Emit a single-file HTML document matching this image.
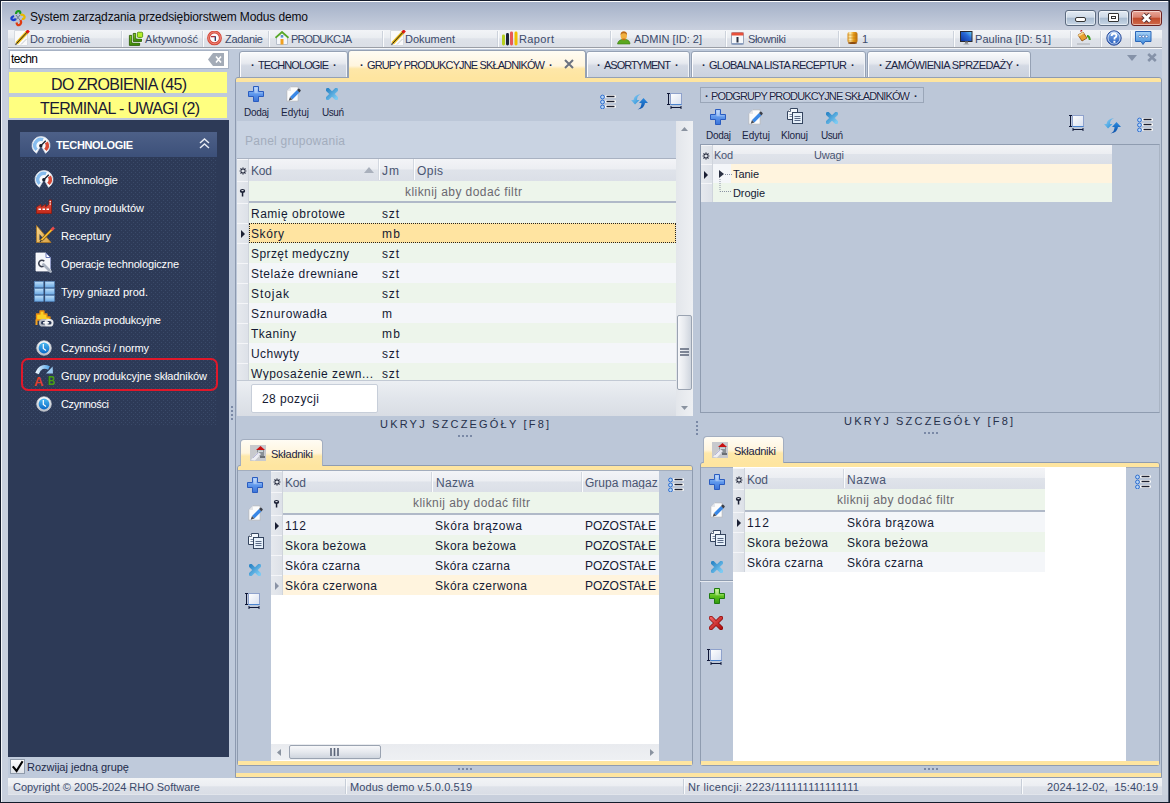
<!DOCTYPE html>
<html><head><meta charset="utf-8"><style>
html,body{margin:0;padding:0;}
body{width:1170px;height:803px;position:relative;overflow:hidden;font-family:'Liberation Sans', sans-serif;background:#bfcadb;}
div{box-sizing:border-box;}
</style></head><body>
<svg width="0" height="0" style="position:absolute"><defs>
<linearGradient id="gPlus" x1="0" y1="0" x2="0" y2="1"><stop offset="0" stop-color="#a9ccfa"/><stop offset="0.5" stop-color="#5f98ec"/><stop offset="1" stop-color="#3a72d8"/></linearGradient>
<linearGradient id="gPlusG" x1="0" y1="0" x2="0" y2="1"><stop offset="0" stop-color="#b6f07a"/><stop offset="0.5" stop-color="#5fc21e"/><stop offset="1" stop-color="#2f9a10"/></linearGradient>
<linearGradient id="gDel" x1="0" y1="0" x2="1" y2="1"><stop offset="0" stop-color="#2e88c8"/><stop offset="1" stop-color="#7ccaf2"/></linearGradient>
<linearGradient id="gRedX" x1="0" y1="0" x2="1" y2="1"><stop offset="0" stop-color="#f06060"/><stop offset="1" stop-color="#b01010"/></linearGradient>
<linearGradient id="gBox" x1="0" y1="0" x2="1" y2="1"><stop offset="0" stop-color="#ffffff"/><stop offset="1" stop-color="#d8e0f0"/></linearGradient>
<linearGradient id="gArrL" x1="0" y1="0" x2="1" y2="1"><stop offset="0" stop-color="#9ad4f6"/><stop offset="1" stop-color="#1d8ad6"/></linearGradient>
<linearGradient id="gArrR" x1="0" y1="0" x2="0" y2="1"><stop offset="0" stop-color="#2b8be0"/><stop offset="1" stop-color="#0b4fa8"/></linearGradient>
<linearGradient id="gGold" x1="0" y1="0" x2="1" y2="0"><stop offset="0" stop-color="#d98a10"/><stop offset="0.25" stop-color="#fff4c0"/><stop offset="0.6" stop-color="#e8a020"/><stop offset="1" stop-color="#b86a08"/></linearGradient>
<linearGradient id="gScreen" x1="0" y1="1" x2="1" y2="0"><stop offset="0" stop-color="#0a2f9a"/><stop offset="0.6" stop-color="#2a6ad8"/><stop offset="1" stop-color="#6ad8f8"/></linearGradient>
<linearGradient id="gHelp" x1="0" y1="0" x2="0" y2="1"><stop offset="0" stop-color="#8fb8f0"/><stop offset="1" stop-color="#1f56b8"/></linearGradient>
<linearGradient id="gChat" x1="0" y1="0" x2="0" y2="1"><stop offset="0" stop-color="#a8d4f8"/><stop offset="1" stop-color="#3a86d8"/></linearGradient>
<linearGradient id="gGreenL" x1="0" y1="0" x2="0" y2="1"><stop offset="0" stop-color="#8ed020"/><stop offset="1" stop-color="#3a8a08"/></linearGradient>
<linearGradient id="gGrid" x1="0" y1="0" x2="0" y2="1"><stop offset="0" stop-color="#bfe0fa"/><stop offset="1" stop-color="#6aa8e2"/></linearGradient>
<linearGradient id="gClock" x1="0" y1="0" x2="0" y2="1"><stop offset="0" stop-color="#4cb8f0"/><stop offset="1" stop-color="#0a6ac8"/></linearGradient>
<linearGradient id="gRing" x1="0" y1="0" x2="0" y2="1"><stop offset="0" stop-color="#ffffff"/><stop offset="1" stop-color="#b8bcc4"/></linearGradient>
<linearGradient id="gFact" x1="0" y1="0" x2="0" y2="1"><stop offset="0" stop-color="#f05a4a"/><stop offset="1" stop-color="#c02818"/></linearGradient>
<linearGradient id="gTri" x1="0" y1="0" x2="1" y2="1"><stop offset="0" stop-color="#f8d890"/><stop offset="1" stop-color="#d8a040"/></linearGradient>
<linearGradient id="gArc" x1="0" y1="0" x2="1" y2="0"><stop offset="0" stop-color="#e6f2fc"/><stop offset="1" stop-color="#58a8e8"/></linearGradient>
</defs></svg>
<div style="position:absolute;left:0px;top:0px;width:1170px;height:803px;background:#bfcadb;"></div>
<div style="position:absolute;left:0px;top:0px;width:1170px;height:30px;background:linear-gradient(#a2afc7,#c9d0de);"></div>
<div style="position:absolute;left:0px;top:0px;width:1170px;height:1px;background:#141c2c;"></div>
<div style="position:absolute;left:0px;top:1px;width:1170px;height:1px;background:#fdfdfe;"></div>
<div style="position:absolute;left:0px;top:0px;width:1px;height:803px;background:#141c2c;"></div>
<div style="position:absolute;left:1169px;top:0px;width:1px;height:803px;background:#141c2c;"></div>
<div style="position:absolute;left:0px;top:802px;width:1170px;height:1px;background:#141c2c;"></div>
<div style="position:absolute;left:1px;top:1px;width:1px;height:801px;background:#f4f6f9;"></div>
<div style="position:absolute;left:1162px;top:30px;width:6px;height:772px;background:#cbd2de;"></div>
<div style="position:absolute;left:2px;top:30px;width:6px;height:772px;background:#c8d0de;"></div>
<div style="position:absolute;left:1168px;top:1px;width:1px;height:801px;background:#566074;"></div>
<div id="t0" style="position:absolute;left:30px;top:11px;font-size:12px;line-height:12px;font-weight:400;color:#0b0b10;white-space:pre;letter-spacing:-0.133px;">System zarządzania przedsiębiorstwem Modus demo</div>
<div style="position:absolute;left:1065px;top:10px;width:31px;height:16px;background:linear-gradient(#e2eaf3 0%,#cfdbe8 45%,#a9bcd1 50%,#c9d7e6 100%);border:1px solid #5c6b80;border-radius:3px;box-shadow:inset 0 0 0 1px rgba(255,255,255,.5);"></div>
<div style="position:absolute;left:1098px;top:10px;width:31px;height:16px;background:linear-gradient(#e2eaf3 0%,#cfdbe8 45%,#a9bcd1 50%,#c9d7e6 100%);border:1px solid #5c6b80;border-radius:3px;box-shadow:inset 0 0 0 1px rgba(255,255,255,.5);"></div>
<div style="position:absolute;left:1131px;top:10px;width:31px;height:16px;background:linear-gradient(#eaa79a 0%,#d9826f 45%,#c04a2c 50%,#cf6a4a 100%);border:1px solid #6b2020;border-radius:3px;box-shadow:inset 0 0 0 1px rgba(255,255,255,.5);"></div>
<div style="position:absolute;left:1075px;top:17px;width:11px;height:5px;background:#fff;border:1px solid #333;border-radius:2px;"></div>
<div style="position:absolute;left:1108px;top:13px;width:11px;height:9px;background:#fff;border:1px solid #333;border-radius:1px;box-shadow:inset 0 0 0 2px #fff, inset 0 0 0 3px #333;"></div>
<svg style="position:absolute;left:1140px;top:12px;" width="13" height="12" viewBox="0 0 13 12"><path d="M3 2.5 L10 9.5 M10 2.5 L3 9.5" stroke="#5a3030" stroke-width="4.6"/><path d="M3 2.5 L10 9.5 M10 2.5 L3 9.5" stroke="#fff" stroke-width="2.8"/></svg>
<div style="position:absolute;left:8px;top:30px;width:1154px;height:17px;background:linear-gradient(#f2f4f7 0%,#eaedf1 45%,#dee2e9 52%,#dbdfe6 100%);"></div>
<div style="position:absolute;left:8px;top:47px;width:1154px;height:1px;background:#9a9ea6;"></div>
<div style="position:absolute;left:8px;top:48px;width:1154px;height:1px;background:#f7f8fa;"></div>
<div style="position:absolute;left:121px;top:31px;width:1px;height:16px;background:#cdd3dc;"></div>
<div style="position:absolute;left:122px;top:31px;width:1px;height:16px;background:#fbfcfd;"></div>
<div style="position:absolute;left:202px;top:31px;width:1px;height:16px;background:#cdd3dc;"></div>
<div style="position:absolute;left:203px;top:31px;width:1px;height:16px;background:#fbfcfd;"></div>
<div style="position:absolute;left:268px;top:31px;width:1px;height:16px;background:#cdd3dc;"></div>
<div style="position:absolute;left:269px;top:31px;width:1px;height:16px;background:#fbfcfd;"></div>
<div style="position:absolute;left:382px;top:31px;width:1px;height:16px;background:#cdd3dc;"></div>
<div style="position:absolute;left:383px;top:31px;width:1px;height:16px;background:#fbfcfd;"></div>
<div style="position:absolute;left:497px;top:31px;width:1px;height:16px;background:#cdd3dc;"></div>
<div style="position:absolute;left:498px;top:31px;width:1px;height:16px;background:#fbfcfd;"></div>
<div style="position:absolute;left:610px;top:31px;width:1px;height:16px;background:#cdd3dc;"></div>
<div style="position:absolute;left:611px;top:31px;width:1px;height:16px;background:#fbfcfd;"></div>
<div style="position:absolute;left:725px;top:31px;width:1px;height:16px;background:#cdd3dc;"></div>
<div style="position:absolute;left:726px;top:31px;width:1px;height:16px;background:#fbfcfd;"></div>
<div style="position:absolute;left:838px;top:31px;width:1px;height:16px;background:#cdd3dc;"></div>
<div style="position:absolute;left:839px;top:31px;width:1px;height:16px;background:#fbfcfd;"></div>
<div style="position:absolute;left:953px;top:31px;width:1px;height:16px;background:#cdd3dc;"></div>
<div style="position:absolute;left:954px;top:31px;width:1px;height:16px;background:#fbfcfd;"></div>
<div style="position:absolute;left:1070px;top:31px;width:1px;height:16px;background:#cdd3dc;"></div>
<div style="position:absolute;left:1071px;top:31px;width:1px;height:16px;background:#fbfcfd;"></div>
<div style="position:absolute;left:1100px;top:31px;width:1px;height:16px;background:#cdd3dc;"></div>
<div style="position:absolute;left:1101px;top:31px;width:1px;height:16px;background:#fbfcfd;"></div>
<div style="position:absolute;left:1130px;top:31px;width:1px;height:16px;background:#cdd3dc;"></div>
<div style="position:absolute;left:1131px;top:31px;width:1px;height:16px;background:#fbfcfd;"></div>
<div id="t1" style="position:absolute;left:30px;top:34px;font-size:11px;line-height:11px;font-weight:400;color:#3b4a6b;white-space:pre;letter-spacing:-0.161px;">Do zrobienia</div>
<div id="t2" style="position:absolute;left:145px;top:34px;font-size:11px;line-height:11px;font-weight:400;color:#3b4a6b;white-space:pre;letter-spacing:0.053px;">Aktywność</div>
<div id="t3" style="position:absolute;left:225px;top:34px;font-size:11px;line-height:11px;font-weight:400;color:#3b4a6b;white-space:pre;letter-spacing:-0.294px;">Zadanie</div>
<div id="t4" style="position:absolute;left:291px;top:34px;font-size:11px;line-height:11px;font-weight:400;color:#3b4a6b;white-space:pre;letter-spacing:-0.855px;">PRODUKCJA</div>
<div id="t5" style="position:absolute;left:405px;top:34px;font-size:11px;line-height:11px;font-weight:400;color:#3b4a6b;white-space:pre;letter-spacing:-0.020px;">Dokument</div>
<div id="t6" style="position:absolute;left:519px;top:34px;font-size:11px;line-height:11px;font-weight:400;color:#3b4a6b;white-space:pre;letter-spacing:0.394px;">Raport</div>
<div id="t7" style="position:absolute;left:634px;top:34px;font-size:11px;line-height:11px;font-weight:400;color:#3b4a6b;white-space:pre;letter-spacing:0.013px;">ADMIN [ID: 2]</div>
<div id="t8" style="position:absolute;left:748px;top:34px;font-size:11px;line-height:11px;font-weight:400;color:#3b4a6b;white-space:pre;letter-spacing:-0.337px;">Słowniki</div>
<div id="t9" style="position:absolute;left:862px;top:34px;font-size:11px;line-height:11px;font-weight:400;color:#3b4a6b;white-space:pre;;">1</div>
<div id="t10" style="position:absolute;left:975px;top:34px;font-size:11px;line-height:11px;font-weight:400;color:#3b4a6b;white-space:pre;letter-spacing:0.052px;">Paulina [ID: 51]</div>
<div style="position:absolute;left:9px;top:50px;width:220px;height:19px;background:#fff;border:1px solid #a7b2c4;"></div>
<div id="t11" style="position:absolute;left:11px;top:53px;font-size:12px;line-height:12px;font-weight:400;color:#000;white-space:pre;letter-spacing:-0.590px;">techn</div>
<svg style="position:absolute;left:208px;top:53px;" width="17" height="13" viewBox="0 0 17 13"><path d="M5 0 H16 V13 H5 L0 6.5 Z" fill="#a3abb7"/><path d="M8 3.5 L13 9.5 M13 3.5 L8 9.5" stroke="#fff" stroke-width="1.6"/></svg>
<div style="position:absolute;left:9px;top:72px;width:218px;height:21px;background:#ffff80;"></div>
<div id="t12" style="position:absolute;left:51px;top:77px;font-size:16px;line-height:16px;font-weight:400;color:#1a1a33;white-space:pre;letter-spacing:-0.669px;">DO ZROBIENIA (45)</div>
<div style="position:absolute;left:9px;top:97px;width:218px;height:21px;background:#ffff80;"></div>
<div id="t13" style="position:absolute;left:40px;top:101px;font-size:16px;line-height:16px;font-weight:400;color:#1a1a33;white-space:pre;letter-spacing:-0.640px;">TERMINAL - UWAGI (2)</div>
<div style="position:absolute;left:8px;top:120px;width:221px;height:637px;background:#2d3a57;"></div>
<svg style="position:absolute;left:20px;top:157px" width="197" height="268" shape-rendering="crispEdges"><defs><pattern id="dots" width="4" height="4" patternUnits="userSpaceOnUse"><rect x="1" y="1" width="1" height="1" fill="#3a4a69"/><rect x="3" y="3" width="1" height="1" fill="#3a4a69"/></pattern></defs><rect width="197" height="268" fill="url(#dots)"/></svg>
<div style="position:absolute;left:20px;top:132px;width:197px;height:25px;background:linear-gradient(#4d6088,#3c5079);"></div>
<div id="t14" style="position:absolute;left:56px;top:140px;font-size:11px;line-height:11px;font-weight:700;color:#ffffff;white-space:pre;letter-spacing:-0.367px;">TECHNOLOGIE</div>
<svg style="position:absolute;left:199px;top:138px;" width="11" height="11" viewBox="0 0 11 11"><path d="M1 5 L5.5 1 L10 5 M1 10 L5.5 6 L10 10" stroke="#e8ecf3" stroke-width="1.5" fill="none"/></svg>
<div id="t15" style="position:absolute;left:61px;top:175px;font-size:11px;line-height:11px;font-weight:400;color:#ffffff;white-space:pre;letter-spacing:-0.172px;">Technologie</div>
<div id="t16" style="position:absolute;left:61px;top:203px;font-size:11px;line-height:11px;font-weight:400;color:#ffffff;white-space:pre;letter-spacing:-0.055px;">Grupy produktów</div>
<div id="t17" style="position:absolute;left:61px;top:231px;font-size:11px;line-height:11px;font-weight:400;color:#ffffff;white-space:pre;letter-spacing:-0.018px;">Receptury</div>
<div id="t18" style="position:absolute;left:61px;top:259px;font-size:11px;line-height:11px;font-weight:400;color:#ffffff;white-space:pre;letter-spacing:-0.140px;">Operacje technologiczne</div>
<div id="t19" style="position:absolute;left:61px;top:287px;font-size:11px;line-height:11px;font-weight:400;color:#ffffff;white-space:pre;letter-spacing:0.010px;">Typy gniazd prod.</div>
<div id="t20" style="position:absolute;left:61px;top:315px;font-size:11px;line-height:11px;font-weight:400;color:#ffffff;white-space:pre;letter-spacing:-0.186px;">Gniazda produkcyjne</div>
<div id="t21" style="position:absolute;left:61px;top:343px;font-size:11px;line-height:11px;font-weight:400;color:#ffffff;white-space:pre;letter-spacing:-0.155px;">Czynności / normy</div>
<div id="t22" style="position:absolute;left:61px;top:371px;font-size:11px;line-height:11px;font-weight:400;color:#ffffff;white-space:pre;letter-spacing:-0.118px;">Grupy produkcyjne składników</div>
<div id="t23" style="position:absolute;left:61px;top:399px;font-size:11px;line-height:11px;font-weight:400;color:#ffffff;white-space:pre;letter-spacing:-0.344px;">Czynności</div>
<div style="position:absolute;left:21px;top:358px;width:197px;height:33px;border:2px solid #e0182a;border-radius:7px;"></div>
<div style="position:absolute;left:10px;top:759px;width:15px;height:15px;background:linear-gradient(#fdfdfd,#dfe3e9);border:1px solid #8f9bab;"></div>
<svg style="position:absolute;left:11px;top:760px;" width="14" height="14" viewBox="0 0 14 14"><path d="M1.8 6.3 L5.6 11 L11.6 1.2" stroke="#000" stroke-width="2.1" fill="none" stroke-linejoin="miter"/></svg>
<div id="t24" style="position:absolute;left:27px;top:762px;font-size:11px;line-height:11px;font-weight:400;color:#1e2a4a;white-space:pre;letter-spacing:-0.007px;">Rozwijaj jedną grupę</div>
<div style="position:absolute;left:2px;top:795px;width:1166px;height:7px;background:#c8cfdc;"></div>
<div style="position:absolute;left:8px;top:778px;width:1154px;height:17px;background:linear-gradient(#f2f4f6 0%,#eceef2 45%,#dee2e9 52%,#dadee6 92%,#e6e9ee 100%);"></div>
<div style="position:absolute;left:345px;top:779px;width:1px;height:15px;background:#c7ced8;"></div>
<div style="position:absolute;left:346px;top:779px;width:1px;height:15px;background:#fafbfc;"></div>
<div style="position:absolute;left:683px;top:779px;width:1px;height:15px;background:#c7ced8;"></div>
<div style="position:absolute;left:684px;top:779px;width:1px;height:15px;background:#fafbfc;"></div>
<div style="position:absolute;left:1021px;top:779px;width:1px;height:15px;background:#c7ced8;"></div>
<div style="position:absolute;left:1022px;top:779px;width:1px;height:15px;background:#fafbfc;"></div>
<div id="t25" style="position:absolute;left:13px;top:782px;font-size:11px;line-height:11px;font-weight:400;color:#3b4a6b;white-space:pre;letter-spacing:-0.027px;">Copyright © 2005-2024 RHO Software</div>
<div id="t26" style="position:absolute;left:350px;top:782px;font-size:11px;line-height:11px;font-weight:400;color:#3b4a6b;white-space:pre;letter-spacing:0.083px;">Modus demo v.5.0.0.519</div>
<div id="t27" style="position:absolute;left:688px;top:782px;font-size:11px;line-height:11px;font-weight:400;color:#3b4a6b;white-space:pre;letter-spacing:0.292px;">Nr licencji: 2223/111111111111111</div>
<div id="t28" style="position:absolute;left:1047px;top:782px;font-size:11px;line-height:11px;font-weight:400;color:#3b4a6b;white-space:pre;letter-spacing:0.137px;">2024-12-02,  15:40:19</div>
<div style="position:absolute;left:235px;top:77px;width:927px;height:701px;background:#bcc7d8;border:1px solid #8d9ab0;border-radius:3px 3px 0 0;"></div>
<div style="position:absolute;left:236px;top:78px;width:925px;height:4px;background:#fee5a0;border-radius:2px 2px 0 0;"></div>
<div style="position:absolute;left:236px;top:773px;width:925px;height:4px;background:#fee5a0;"></div>
<div style="position:absolute;left:239px;top:51px;width:109px;height:27px;background:linear-gradient(#fafbfc,#e6e9ef 45%,#d3d9e4 55%,#cbd2de);border:1px solid #95a1b4;border-radius:3px 3px 0 0;box-shadow:inset 1px 1px 0 #fdfdfe, inset -1px 0 0 #f0f3f7;"></div>
<div id="t29" style="position:absolute;left:258px;top:60px;font-size:11px;line-height:11px;font-weight:400;color:#1a2442;white-space:pre;letter-spacing:-0.908px;">TECHNOLOGIE</div>
<div id="t30" style="position:absolute;left:251px;top:60px;font-size:11px;line-height:11px;font-weight:700;color:#1a2442;white-space:pre;;">·</div>
<div id="t31" style="position:absolute;left:333px;top:60px;font-size:11px;line-height:11px;font-weight:700;color:#1a2442;white-space:pre;;">·</div>
<div style="position:absolute;left:586px;top:51px;width:104px;height:27px;background:linear-gradient(#fafbfc,#e6e9ef 45%,#d3d9e4 55%,#cbd2de);border:1px solid #95a1b4;border-radius:3px 3px 0 0;box-shadow:inset 1px 1px 0 #fdfdfe, inset -1px 0 0 #f0f3f7;"></div>
<div id="t32" style="position:absolute;left:604px;top:60px;font-size:11px;line-height:11px;font-weight:400;color:#1a2442;white-space:pre;letter-spacing:-1.023px;">ASORTYMENT</div>
<div id="t33" style="position:absolute;left:597px;top:60px;font-size:11px;line-height:11px;font-weight:700;color:#1a2442;white-space:pre;;">·</div>
<div id="t34" style="position:absolute;left:675px;top:60px;font-size:11px;line-height:11px;font-weight:700;color:#1a2442;white-space:pre;;">·</div>
<div style="position:absolute;left:691px;top:51px;width:175px;height:27px;background:linear-gradient(#fafbfc,#e6e9ef 45%,#d3d9e4 55%,#cbd2de);border:1px solid #95a1b4;border-radius:3px 3px 0 0;box-shadow:inset 1px 1px 0 #fdfdfe, inset -1px 0 0 #f0f3f7;"></div>
<div id="t35" style="position:absolute;left:709px;top:60px;font-size:11px;line-height:11px;font-weight:400;color:#1a2442;white-space:pre;letter-spacing:-0.749px;">GLOBALNA LISTA RECEPTUR</div>
<div id="t36" style="position:absolute;left:702px;top:60px;font-size:11px;line-height:11px;font-weight:700;color:#1a2442;white-space:pre;;">·</div>
<div id="t37" style="position:absolute;left:851px;top:60px;font-size:11px;line-height:11px;font-weight:700;color:#1a2442;white-space:pre;;">·</div>
<div style="position:absolute;left:867px;top:51px;width:164px;height:27px;background:linear-gradient(#fafbfc,#e6e9ef 45%,#d3d9e4 55%,#cbd2de);border:1px solid #95a1b4;border-radius:3px 3px 0 0;box-shadow:inset 1px 1px 0 #fdfdfe, inset -1px 0 0 #f0f3f7;"></div>
<div id="t38" style="position:absolute;left:885px;top:60px;font-size:11px;line-height:11px;font-weight:400;color:#1a2442;white-space:pre;letter-spacing:-0.598px;">ZAMÓWIENIA SPRZEDAŻY</div>
<div id="t39" style="position:absolute;left:879px;top:60px;font-size:11px;line-height:11px;font-weight:700;color:#1a2442;white-space:pre;;">·</div>
<div id="t40" style="position:absolute;left:1016px;top:60px;font-size:11px;line-height:11px;font-weight:700;color:#1a2442;white-space:pre;;">·</div>
<div style="position:absolute;left:348px;top:50px;width:238px;height:28px;background:linear-gradient(#fffcf4,#fff5de 55%,#fee7a8 66%,#fee5a0);border:1px solid #95a1b4;border-bottom:none;border-radius:3px 3px 0 0;"></div>
<div id="t41" style="position:absolute;left:367px;top:60px;font-size:11px;line-height:11px;font-weight:400;color:#1a2442;white-space:pre;letter-spacing:-0.871px;">GRUPY PRODUKCYJNE SKŁADNIKÓW</div>
<div id="t42" style="position:absolute;left:360px;top:60px;font-size:11px;line-height:11px;font-weight:700;color:#1a2442;white-space:pre;;">·</div>
<div id="t43" style="position:absolute;left:549px;top:60px;font-size:11px;line-height:11px;font-weight:700;color:#1a2442;white-space:pre;;">·</div>
<svg style="position:absolute;left:564px;top:59px;" width="10" height="10" viewBox="0 0 10 10"><path d="M1 1 L9 9 M9 1 L1 9" stroke="#6b7280" stroke-width="2"/></svg>
<svg style="position:absolute;left:1127px;top:55px;" width="10" height="6" viewBox="0 0 10 6"><path d="M0 0 H10 L5 6 Z" fill="#8592a8"/></svg>
<svg style="position:absolute;left:1147px;top:53px;" width="10" height="9" viewBox="0 0 10 9"><path d="M1.2 1 L8.8 8 M8.8 1 L1.2 8" stroke="#8592a8" stroke-width="2.6"/></svg>
<div style="position:absolute;left:237px;top:121px;width:439px;height:38px;background:#c9d3e2;border-bottom:1px solid #a9b2c2;"></div>
<div id="t44" style="position:absolute;left:245px;top:135px;font-size:12px;line-height:12px;font-weight:400;color:#a3adbd;white-space:pre;letter-spacing:0.261px;">Panel grupowania</div>
<div style="position:absolute;left:237px;top:159px;width:439px;height:22px;background:linear-gradient(#f3f4f7 0%,#eceef2 45%,#dfe3ea 50%,#dbdfe7 100%);"></div>
<div style="position:absolute;left:237px;top:159px;width:12px;height:22px;background:linear-gradient(90deg,#e6e9ee,#dde1e8);border-right:1px solid #cfd4dc;box-shadow:inset 0 1px 0 #f4f5f8;"></div>
<svg style="position:absolute;left:239px;top:167px;" width="8" height="8" viewBox="0 0 8 8"><g stroke="#1a1f33" stroke-width="1.2"><path d="M4 0.6 V2.9 M4 5.1 V7.4 M0.6 4 H2.9 M5.1 4 H7.4"/><path d="M1.5 1.5 L2.9 2.9 M5.1 5.1 L6.5 6.5 M6.5 1.5 L5.1 2.9 M2.9 5.1 L1.5 6.5"/></g></svg>
<div id="t45" style="position:absolute;left:251px;top:165px;font-size:12px;line-height:12px;font-weight:400;color:#4a5572;white-space:pre;letter-spacing:-0.180px;">Kod</div>
<svg style="position:absolute;left:364px;top:167px;" width="10" height="6" viewBox="0 0 10 6"><path d="M0 6 L5 0 L10 6 Z" fill="#a9b0bc"/></svg>
<div style="position:absolute;left:379px;top:159px;width:1px;height:21px;background:#fbfcfd;box-shadow:-1px 0 0 #d3d8e0;"></div>
<div id="t46" style="position:absolute;left:382px;top:165px;font-size:12px;line-height:12px;font-weight:400;color:#4a5572;white-space:pre;letter-spacing:1.000px;">Jm</div>
<div style="position:absolute;left:414px;top:159px;width:1px;height:21px;background:#fbfcfd;box-shadow:-1px 0 0 #d3d8e0;"></div>
<div id="t47" style="position:absolute;left:417px;top:165px;font-size:12px;line-height:12px;font-weight:400;color:#4a5572;white-space:pre;letter-spacing:0.438px;">Opis</div>
<div style="position:absolute;left:249px;top:181px;width:427px;height:20px;background:#edf5eb;"></div>
<div style="position:absolute;left:237px;top:181px;width:12px;height:22px;background:linear-gradient(90deg,#e6e9ee,#dde1e8);border-right:1px solid #cfd4dc;box-shadow:inset 0 1px 0 #f4f5f8;"></div>
<svg style="position:absolute;left:239px;top:189px;" width="7" height="8" viewBox="0 0 7 8"><ellipse cx="3.5" cy="2" rx="2.7" ry="1.9" fill="#1a1f33"/><ellipse cx="3.5" cy="1.6" rx="1.3" ry="0.6" fill="#e6e9ee"/><rect x="2.8" y="3.3" width="1.5" height="4.2" fill="#1a1f33"/></svg>
<div id="t48" style="position:absolute;left:405px;top:186px;font-size:12px;line-height:12px;font-weight:400;color:#6b6870;white-space:pre;letter-spacing:0.437px;">kliknij aby dodać filtr</div>
<div style="position:absolute;left:249px;top:201px;width:427px;height:2px;background:#b0b9c8;"></div>
<div style="position:absolute;left:249px;top:203px;width:427px;height:20px;background:#edf5eb;"></div>
<div style="position:absolute;left:237px;top:203px;width:12px;height:20px;background:linear-gradient(90deg,#e6e9ee,#dde1e8);border-right:1px solid #cfd4dc;box-shadow:inset 0 1px 0 #f4f5f8;"></div>
<div id="t49" style="position:absolute;left:251px;top:208px;font-size:12px;line-height:12px;font-weight:400;color:#141a33;white-space:pre;letter-spacing:0.510px;">Ramię obrotowe</div>
<div id="t50" style="position:absolute;left:382px;top:208px;font-size:12px;line-height:12px;font-weight:400;color:#141a33;white-space:pre;letter-spacing:0.828px;">szt</div>
<div style="position:absolute;left:249px;top:223px;width:427px;height:20px;background:#ffe4a1;"></div>
<div style="position:absolute;left:237px;top:223px;width:12px;height:20px;background:linear-gradient(90deg,#e6e9ee,#dde1e8);border-right:1px solid #cfd4dc;box-shadow:inset 0 1px 0 #f4f5f8;"></div>
<div style="position:absolute;left:249px;top:223px;width:427px;height:20px;border:1px dotted #222;"></div>
<svg style="position:absolute;left:241px;top:230px;" width="4" height="8" viewBox="0 0 4 8"><path d="M0 0 L4 4 L0 8 Z" fill="#1a1f33"/></svg>
<div id="t51" style="position:absolute;left:251px;top:228px;font-size:12px;line-height:12px;font-weight:400;color:#141a33;white-space:pre;letter-spacing:0.578px;">Skóry</div>
<div id="t52" style="position:absolute;left:382px;top:228px;font-size:12px;line-height:12px;font-weight:400;color:#141a33;white-space:pre;letter-spacing:1.328px;">mb</div>
<div style="position:absolute;left:249px;top:243px;width:427px;height:20px;background:#edf5eb;"></div>
<div style="position:absolute;left:237px;top:243px;width:12px;height:20px;background:linear-gradient(90deg,#e6e9ee,#dde1e8);border-right:1px solid #cfd4dc;box-shadow:inset 0 1px 0 #f4f5f8;"></div>
<div id="t53" style="position:absolute;left:251px;top:248px;font-size:12px;line-height:12px;font-weight:400;color:#141a33;white-space:pre;letter-spacing:0.425px;">Sprzęt medyczny</div>
<div id="t54" style="position:absolute;left:382px;top:248px;font-size:12px;line-height:12px;font-weight:400;color:#141a33;white-space:pre;letter-spacing:0.828px;">szt</div>
<div style="position:absolute;left:249px;top:263px;width:427px;height:20px;background:#f4f6f9;"></div>
<div style="position:absolute;left:237px;top:263px;width:12px;height:20px;background:linear-gradient(90deg,#e6e9ee,#dde1e8);border-right:1px solid #cfd4dc;box-shadow:inset 0 1px 0 #f4f5f8;"></div>
<div id="t55" style="position:absolute;left:251px;top:268px;font-size:12px;line-height:12px;font-weight:400;color:#141a33;white-space:pre;letter-spacing:0.517px;">Stelaże drewniane</div>
<div id="t56" style="position:absolute;left:382px;top:268px;font-size:12px;line-height:12px;font-weight:400;color:#141a33;white-space:pre;letter-spacing:0.828px;">szt</div>
<div style="position:absolute;left:249px;top:283px;width:427px;height:20px;background:#edf5eb;"></div>
<div style="position:absolute;left:237px;top:283px;width:12px;height:20px;background:linear-gradient(90deg,#e6e9ee,#dde1e8);border-right:1px solid #cfd4dc;box-shadow:inset 0 1px 0 #f4f5f8;"></div>
<div id="t57" style="position:absolute;left:251px;top:288px;font-size:12px;line-height:12px;font-weight:400;color:#141a33;white-space:pre;letter-spacing:0.928px;">Stojak</div>
<div id="t58" style="position:absolute;left:382px;top:288px;font-size:12px;line-height:12px;font-weight:400;color:#141a33;white-space:pre;letter-spacing:0.828px;">szt</div>
<div style="position:absolute;left:249px;top:303px;width:427px;height:20px;background:#f4f6f9;"></div>
<div style="position:absolute;left:237px;top:303px;width:12px;height:20px;background:linear-gradient(90deg,#e6e9ee,#dde1e8);border-right:1px solid #cfd4dc;box-shadow:inset 0 1px 0 #f4f5f8;"></div>
<div id="t59" style="position:absolute;left:251px;top:308px;font-size:12px;line-height:12px;font-weight:400;color:#141a33;white-space:pre;letter-spacing:0.662px;">Sznurowadła</div>
<div id="t60" style="position:absolute;left:382px;top:308px;font-size:12px;line-height:12px;font-weight:400;color:#141a33;white-space:pre;letter-spacing:2.000px;">m</div>
<div style="position:absolute;left:249px;top:323px;width:427px;height:20px;background:#edf5eb;"></div>
<div style="position:absolute;left:237px;top:323px;width:12px;height:20px;background:linear-gradient(90deg,#e6e9ee,#dde1e8);border-right:1px solid #cfd4dc;box-shadow:inset 0 1px 0 #f4f5f8;"></div>
<div id="t61" style="position:absolute;left:251px;top:328px;font-size:12px;line-height:12px;font-weight:400;color:#141a33;white-space:pre;letter-spacing:0.495px;">Tkaniny</div>
<div id="t62" style="position:absolute;left:382px;top:328px;font-size:12px;line-height:12px;font-weight:400;color:#141a33;white-space:pre;letter-spacing:1.328px;">mb</div>
<div style="position:absolute;left:249px;top:343px;width:427px;height:20px;background:#f4f6f9;"></div>
<div style="position:absolute;left:237px;top:343px;width:12px;height:20px;background:linear-gradient(90deg,#e6e9ee,#dde1e8);border-right:1px solid #cfd4dc;box-shadow:inset 0 1px 0 #f4f5f8;"></div>
<div id="t63" style="position:absolute;left:251px;top:348px;font-size:12px;line-height:12px;font-weight:400;color:#141a33;white-space:pre;letter-spacing:0.443px;">Uchwyty</div>
<div id="t64" style="position:absolute;left:382px;top:348px;font-size:12px;line-height:12px;font-weight:400;color:#141a33;white-space:pre;letter-spacing:0.828px;">szt</div>
<div style="position:absolute;left:249px;top:363px;width:427px;height:17px;background:#edf5eb;"></div>
<div style="position:absolute;left:237px;top:363px;width:12px;height:17px;background:linear-gradient(90deg,#e6e9ee,#dde1e8);border-right:1px solid #cfd4dc;box-shadow:inset 0 1px 0 #f4f5f8;"></div>
<div id="t65" style="position:absolute;left:251px;top:368px;font-size:12px;line-height:12px;font-weight:400;color:#141a33;white-space:pre;letter-spacing:0.484px;">Wyposażenie zewn...</div>
<div id="t66" style="position:absolute;left:382px;top:368px;font-size:12px;line-height:12px;font-weight:400;color:#141a33;white-space:pre;letter-spacing:0.828px;">szt</div>
<div style="position:absolute;left:237px;top:380px;width:439px;height:36px;background:linear-gradient(#eceff3,#e1e5eb 50%,#d9dde4);border-top:1px solid #c2c9d4;"></div>
<div style="position:absolute;left:251px;top:384px;width:127px;height:29px;background:#fff;border:1px solid #c7ced9;border-radius:2px;"></div>
<div id="t67" style="position:absolute;left:262px;top:393px;font-size:12px;line-height:12px;font-weight:400;color:#141a33;white-space:pre;letter-spacing:0.403px;">28 pozycji</div>
<div style="position:absolute;left:676px;top:121px;width:17px;height:295px;background:linear-gradient(90deg,#e3e6eb,#eef0f3);"></div>
<svg style="position:absolute;left:681px;top:127px;" width="7" height="4" viewBox="0 0 7 4"><path d="M0 4 L3.5 0 L7 4 Z" fill="#8a93a0"/></svg>
<svg style="position:absolute;left:681px;top:406px;" width="7" height="4" viewBox="0 0 7 4"><path d="M0 0 L3.5 4 L7 0 Z" fill="#8a93a0"/></svg>
<div style="position:absolute;left:677px;top:315px;width:15px;height:75px;background:linear-gradient(90deg,#f7f8fa,#e6e9ee 50%,#cfd5de);border:1px solid #9aa3b1;border-radius:2px;"></div>
<svg style="position:absolute;left:680px;top:348px;" width="9" height="8" viewBox="0 0 9 8"><path d="M0 1 H9 M0 4 H9 M0 7 H9" stroke="#5b6478" stroke-width="1.5"/></svg>
<div style="position:absolute;left:700px;top:87px;width:224px;height:16px;border:1px solid #9aa6b8;background:#bfcadb;"></div>
<div id="t68" style="position:absolute;left:711px;top:91px;font-size:11px;line-height:11px;font-weight:400;color:#1a2442;white-space:pre;letter-spacing:-0.878px;text-shadow:0 0 2px #fff;">PODGRUPY PRODUKCYJNE SKŁADNIKÓW</div>
<div id="t69" style="position:absolute;left:705px;top:91px;font-size:11px;line-height:11px;font-weight:700;color:#1a2442;white-space:pre;;">·</div>
<div id="t70" style="position:absolute;left:914px;top:91px;font-size:11px;line-height:11px;font-weight:700;color:#1a2442;white-space:pre;;">·</div>
<div style="position:absolute;left:700px;top:144px;width:460px;height:269px;border:1px solid #8f9cb0;border-right:1px solid #a9b4c4;"></div>
<div style="position:absolute;left:701px;top:145px;width:411px;height:19px;background:linear-gradient(#f3f4f7 0%,#eceef2 45%,#dfe3ea 50%,#dbdfe7 100%);"></div>
<div style="position:absolute;left:701px;top:145px;width:12px;height:19px;background:linear-gradient(90deg,#e6e9ee,#dde1e8);border-right:1px solid #cfd4dc;box-shadow:inset 0 1px 0 #f4f5f8;"></div>
<svg style="position:absolute;left:702px;top:152px;" width="8" height="8" viewBox="0 0 8 8"><g stroke="#1a1f33" stroke-width="1.2"><path d="M4 0.6 V2.9 M4 5.1 V7.4 M0.6 4 H2.9 M5.1 4 H7.4"/><path d="M1.5 1.5 L2.9 2.9 M5.1 5.1 L6.5 6.5 M6.5 1.5 L5.1 2.9 M2.9 5.1 L1.5 6.5"/></g></svg>
<div id="t71" style="position:absolute;left:714px;top:150px;font-size:11px;line-height:11px;font-weight:400;color:#4a5572;white-space:pre;letter-spacing:-0.289px;">Kod</div>
<div id="t72" style="position:absolute;left:814px;top:150px;font-size:11px;line-height:11px;font-weight:400;color:#4a5572;white-space:pre;letter-spacing:-0.145px;">Uwagi</div>
<div style="position:absolute;left:713px;top:164px;width:18px;height:19px;background:#f4f6f9;"></div>
<div style="position:absolute;left:731px;top:164px;width:381px;height:19px;background:#fff4de;"></div>
<div style="position:absolute;left:701px;top:164px;width:12px;height:19px;background:linear-gradient(90deg,#e6e9ee,#dde1e8);border-right:1px solid #cfd4dc;box-shadow:inset 0 1px 0 #f4f5f8;"></div>
<svg style="position:absolute;left:704px;top:171px;" width="4" height="8" viewBox="0 0 4 8"><path d="M0 0 L4 4 L0 8 Z" fill="#1a1f33"/></svg>
<div style="position:absolute;left:713px;top:183px;width:399px;height:19px;background:#edf5eb;"></div>
<div style="position:absolute;left:701px;top:183px;width:12px;height:19px;background:linear-gradient(90deg,#e6e9ee,#dde1e8);border-right:1px solid #cfd4dc;box-shadow:inset 0 1px 0 #f4f5f8;"></div>
<svg style="position:absolute;left:716px;top:168px;" width="18" height="28" viewBox="0 0 18 28"><path d="M3 2 L8 6 L3 10 Z" fill="#2a3042"/><path d="M9 6.5 H16 M4 11 V23.5 M4 23.5 H16" stroke="#8b93a3" stroke-width="1" stroke-dasharray="1 1" fill="none"/></svg>
<div id="t73" style="position:absolute;left:733px;top:169px;font-size:11px;line-height:11px;font-weight:400;color:#141a33;white-space:pre;letter-spacing:-0.074px;">Tanie</div>
<div id="t74" style="position:absolute;left:733px;top:188px;font-size:11px;line-height:11px;font-weight:400;color:#141a33;white-space:pre;letter-spacing:-0.081px;">Drogie</div>
<div id="t75" style="position:absolute;left:380px;top:419px;font-size:11px;line-height:11px;font-weight:400;color:#26304a;white-space:pre;letter-spacing:2.192px;">UKRYJ SZCZEGÓŁY [F8]</div>
<div id="t76" style="position:absolute;left:844px;top:416px;font-size:11px;line-height:11px;font-weight:400;color:#26304a;white-space:pre;letter-spacing:2.192px;">UKRYJ SZCZEGÓŁY [F8]</div>
<div style="position:absolute;left:458px;top:435px;width:2px;height:2px;background:#7a89a6;"></div>
<div style="position:absolute;left:924px;top:432px;width:2px;height:2px;background:#7a89a6;"></div>
<div style="position:absolute;left:231px;top:406px;width:2px;height:2px;background:#7a89a6;"></div>
<div style="position:absolute;left:696px;top:421px;width:2px;height:2px;background:#7a89a6;"></div>
<div style="position:absolute;left:458px;top:768px;width:2px;height:2px;background:#7a89a6;"></div>
<div style="position:absolute;left:924px;top:768px;width:2px;height:2px;background:#7a89a6;"></div>
<div style="position:absolute;left:462px;top:435px;width:2px;height:2px;background:#7a89a6;"></div>
<div style="position:absolute;left:928px;top:432px;width:2px;height:2px;background:#7a89a6;"></div>
<div style="position:absolute;left:231px;top:410px;width:2px;height:2px;background:#7a89a6;"></div>
<div style="position:absolute;left:696px;top:425px;width:2px;height:2px;background:#7a89a6;"></div>
<div style="position:absolute;left:462px;top:768px;width:2px;height:2px;background:#7a89a6;"></div>
<div style="position:absolute;left:928px;top:768px;width:2px;height:2px;background:#7a89a6;"></div>
<div style="position:absolute;left:466px;top:435px;width:2px;height:2px;background:#7a89a6;"></div>
<div style="position:absolute;left:932px;top:432px;width:2px;height:2px;background:#7a89a6;"></div>
<div style="position:absolute;left:231px;top:414px;width:2px;height:2px;background:#7a89a6;"></div>
<div style="position:absolute;left:696px;top:429px;width:2px;height:2px;background:#7a89a6;"></div>
<div style="position:absolute;left:466px;top:768px;width:2px;height:2px;background:#7a89a6;"></div>
<div style="position:absolute;left:932px;top:768px;width:2px;height:2px;background:#7a89a6;"></div>
<div style="position:absolute;left:470px;top:435px;width:2px;height:2px;background:#7a89a6;"></div>
<div style="position:absolute;left:936px;top:432px;width:2px;height:2px;background:#7a89a6;"></div>
<div style="position:absolute;left:231px;top:418px;width:2px;height:2px;background:#7a89a6;"></div>
<div style="position:absolute;left:696px;top:433px;width:2px;height:2px;background:#7a89a6;"></div>
<div style="position:absolute;left:470px;top:768px;width:2px;height:2px;background:#7a89a6;"></div>
<div style="position:absolute;left:936px;top:768px;width:2px;height:2px;background:#7a89a6;"></div>
<div style="position:absolute;left:237px;top:465px;width:456px;height:301px;background:#bcc7d8;border:1px solid #8f9cb0;border-radius:3px;"></div>
<div style="position:absolute;left:238px;top:466px;width:454px;height:4px;background:#fee5a0;border-radius:2px 2px 0 0;"></div>
<div style="position:absolute;left:238px;top:470px;width:454px;height:1px;background:#a3adbd;"></div>
<div style="position:absolute;left:238px;top:761px;width:454px;height:4px;background:#fee5a0;"></div>
<div style="position:absolute;left:240px;top:439px;width:83px;height:27px;background:linear-gradient(#fffcf4,#fff5de 50%,#fee8aa 62%,#fee5a0);border:1px solid #a3aec0;border-bottom:none;border-radius:4px 4px 0 0;"></div>
<div id="t77" style="position:absolute;left:271px;top:449px;font-size:11px;line-height:11px;font-weight:400;color:#1a2442;white-space:pre;letter-spacing:-0.254px;">Składniki</div>
<div style="position:absolute;left:271px;top:471px;width:388px;height:290px;background:#fff;"></div>
<div style="position:absolute;left:271px;top:471px;width:388px;height:22px;background:linear-gradient(#f3f4f7 0%,#eceef2 45%,#dfe3ea 50%,#dbdfe7 100%);"></div>
<div style="position:absolute;left:271px;top:471px;width:12px;height:22px;background:linear-gradient(90deg,#e6e9ee,#dde1e8);border-right:1px solid #cfd4dc;box-shadow:inset 0 1px 0 #f4f5f8;"></div>
<svg style="position:absolute;left:273px;top:478px;" width="8" height="8" viewBox="0 0 8 8"><g stroke="#1a1f33" stroke-width="1.2"><path d="M4 0.6 V2.9 M4 5.1 V7.4 M0.6 4 H2.9 M5.1 4 H7.4"/><path d="M1.5 1.5 L2.9 2.9 M5.1 5.1 L6.5 6.5 M6.5 1.5 L5.1 2.9 M2.9 5.1 L1.5 6.5"/></g></svg>
<div id="t78" style="position:absolute;left:285px;top:477px;font-size:12px;line-height:12px;font-weight:400;color:#4a5572;white-space:pre;letter-spacing:-0.180px;">Kod</div>
<div style="position:absolute;left:432px;top:472px;width:1px;height:20px;background:#fbfcfd;box-shadow:-1px 0 0 #d3d8e0;"></div>
<div id="t79" style="position:absolute;left:436px;top:477px;font-size:12px;line-height:12px;font-weight:400;color:#4a5572;white-space:pre;letter-spacing:0.328px;">Nazwa</div>
<div style="position:absolute;left:582px;top:472px;width:1px;height:20px;background:#fbfcfd;box-shadow:-1px 0 0 #d3d8e0;"></div>
<div id="t80" style="position:absolute;left:585px;top:477px;font-size:12px;line-height:12px;font-weight:400;color:#4a5572;white-space:pre;;width:74px;overflow:hidden;">Grupa magaz</div>
<div style="position:absolute;left:283px;top:492px;width:376px;height:21px;background:#edf5eb;"></div>
<div style="position:absolute;left:271px;top:492px;width:12px;height:23px;background:linear-gradient(90deg,#e6e9ee,#dde1e8);border-right:1px solid #cfd4dc;box-shadow:inset 0 1px 0 #f4f5f8;"></div>
<svg style="position:absolute;left:273px;top:500px;" width="7" height="8" viewBox="0 0 7 8"><ellipse cx="3.5" cy="2" rx="2.7" ry="1.9" fill="#1a1f33"/><ellipse cx="3.5" cy="1.6" rx="1.3" ry="0.6" fill="#e6e9ee"/><rect x="2.8" y="3.3" width="1.5" height="4.2" fill="#1a1f33"/></svg>
<div id="t81" style="position:absolute;left:413px;top:497px;font-size:12px;line-height:12px;font-weight:400;color:#6b6870;white-space:pre;letter-spacing:0.437px;">kliknij aby dodać filtr</div>
<div style="position:absolute;left:283px;top:513px;width:376px;height:2px;background:#b0b9c8;"></div>
<div style="position:absolute;left:283px;top:515px;width:376px;height:20px;background:#f4f6f9;"></div>
<div style="position:absolute;left:271px;top:515px;width:12px;height:20px;background:linear-gradient(90deg,#e6e9ee,#dde1e8);border-right:1px solid #cfd4dc;box-shadow:inset 0 1px 0 #f4f5f8;"></div>
<div id="t82" style="position:absolute;left:285px;top:520px;font-size:12px;line-height:12px;font-weight:400;color:#141a33;white-space:pre;letter-spacing:0.930px;">112</div>
<div id="t83" style="position:absolute;left:435px;top:520px;font-size:12px;line-height:12px;font-weight:400;color:#141a33;white-space:pre;letter-spacing:0.579px;">Skóra brązowa</div>
<div id="t84" style="position:absolute;left:585px;top:520px;font-size:12px;line-height:12px;font-weight:400;color:#141a33;white-space:pre;letter-spacing:-0.018px;">POZOSTAŁE</div>
<div style="position:absolute;left:283px;top:535px;width:376px;height:20px;background:#edf5eb;"></div>
<div style="position:absolute;left:271px;top:535px;width:12px;height:20px;background:linear-gradient(90deg,#e6e9ee,#dde1e8);border-right:1px solid #cfd4dc;box-shadow:inset 0 1px 0 #f4f5f8;"></div>
<div id="t85" style="position:absolute;left:285px;top:540px;font-size:12px;line-height:12px;font-weight:400;color:#141a33;white-space:pre;letter-spacing:0.450px;">Skora beżowa</div>
<div id="t86" style="position:absolute;left:435px;top:540px;font-size:12px;line-height:12px;font-weight:400;color:#141a33;white-space:pre;letter-spacing:0.450px;">Skora beżowa</div>
<div id="t87" style="position:absolute;left:585px;top:540px;font-size:12px;line-height:12px;font-weight:400;color:#141a33;white-space:pre;letter-spacing:-0.018px;">POZOSTAŁE</div>
<div style="position:absolute;left:283px;top:555px;width:376px;height:20px;background:#f4f6f9;"></div>
<div style="position:absolute;left:271px;top:555px;width:12px;height:20px;background:linear-gradient(90deg,#e6e9ee,#dde1e8);border-right:1px solid #cfd4dc;box-shadow:inset 0 1px 0 #f4f5f8;"></div>
<div id="t88" style="position:absolute;left:285px;top:560px;font-size:12px;line-height:12px;font-weight:400;color:#141a33;white-space:pre;letter-spacing:0.391px;">Skóra czarna</div>
<div id="t89" style="position:absolute;left:435px;top:560px;font-size:12px;line-height:12px;font-weight:400;color:#141a33;white-space:pre;letter-spacing:0.391px;">Skóra czarna</div>
<div id="t90" style="position:absolute;left:585px;top:560px;font-size:12px;line-height:12px;font-weight:400;color:#141a33;white-space:pre;letter-spacing:-0.018px;">POZOSTAŁE</div>
<div style="position:absolute;left:283px;top:575px;width:376px;height:20px;background:#fff4de;"></div>
<div style="position:absolute;left:271px;top:575px;width:12px;height:20px;background:linear-gradient(90deg,#e6e9ee,#dde1e8);border-right:1px solid #cfd4dc;box-shadow:inset 0 1px 0 #f4f5f8;"></div>
<div id="t91" style="position:absolute;left:285px;top:580px;font-size:12px;line-height:12px;font-weight:400;color:#141a33;white-space:pre;letter-spacing:0.458px;">Skóra czerwona</div>
<div id="t92" style="position:absolute;left:435px;top:580px;font-size:12px;line-height:12px;font-weight:400;color:#141a33;white-space:pre;letter-spacing:0.458px;">Skóra czerwona</div>
<div id="t93" style="position:absolute;left:585px;top:580px;font-size:12px;line-height:12px;font-weight:400;color:#141a33;white-space:pre;letter-spacing:-0.018px;">POZOSTAŁE</div>
<svg style="position:absolute;left:275px;top:522px;" width="4" height="8" viewBox="0 0 4 8"><path d="M0 0 L4 4 L0 8 Z" fill="#1a1f33"/></svg>
<svg style="position:absolute;left:275px;top:582px;" width="4" height="8" viewBox="0 0 4 8"><path d="M0 0 L4 4 L0 8 Z" fill="#8a93a5"/></svg>
<div style="position:absolute;left:271px;top:744px;width:388px;height:16px;background:linear-gradient(#e9ebef,#eef0f3);"></div>
<svg style="position:absolute;left:277px;top:749px;" width="4" height="7" viewBox="0 0 4 7"><path d="M4 0 L0 3.5 L4 7 Z" fill="#8a93a0"/></svg>
<svg style="position:absolute;left:650px;top:749px;" width="4" height="7" viewBox="0 0 4 7"><path d="M0 0 L4 3.5 L0 7 Z" fill="#8a93a0"/></svg>
<div style="position:absolute;left:289px;top:745px;width:92px;height:14px;background:linear-gradient(#f7f8fa,#e6e9ee 50%,#cfd5de);border:1px solid #9aa3b1;border-radius:2px;"></div>
<svg style="position:absolute;left:330px;top:748px;" width="9" height="8" viewBox="0 0 9 8"><path d="M1 0 V8 M4.5 0 V8 M8 0 V8" stroke="#5b6478" stroke-width="1.6"/></svg>
<div style="position:absolute;left:700px;top:462px;width:460px;height:304px;background:#bcc7d8;border:1px solid #8f9cb0;border-radius:3px;"></div>
<div style="position:absolute;left:701px;top:463px;width:458px;height:4px;background:#fee5a0;border-radius:2px 2px 0 0;"></div>
<div style="position:absolute;left:701px;top:467px;width:458px;height:1px;background:#a3adbd;"></div>
<div style="position:absolute;left:701px;top:761px;width:458px;height:4px;background:#fee5a0;"></div>
<div style="position:absolute;left:703px;top:436px;width:81px;height:27px;background:linear-gradient(#fffcf4,#fff5de 50%,#fee8aa 62%,#fee5a0);border:1px solid #a3aec0;border-bottom:none;border-radius:4px 4px 0 0;"></div>
<div id="t94" style="position:absolute;left:734px;top:446px;font-size:11px;line-height:11px;font-weight:400;color:#1a2442;white-space:pre;letter-spacing:-0.254px;">Składniki</div>
<div style="position:absolute;left:733px;top:467px;width:393px;height:294px;background:#fff;"></div>
<div style="position:absolute;left:733px;top:468px;width:312px;height:21px;background:linear-gradient(#f3f4f7 0%,#eceef2 45%,#dfe3ea 50%,#dbdfe7 100%);"></div>
<div style="position:absolute;left:733px;top:468px;width:12px;height:21px;background:linear-gradient(90deg,#e6e9ee,#dde1e8);border-right:1px solid #cfd4dc;box-shadow:inset 0 1px 0 #f4f5f8;"></div>
<svg style="position:absolute;left:735px;top:476px;" width="8" height="8" viewBox="0 0 8 8"><g stroke="#1a1f33" stroke-width="1.2"><path d="M4 0.6 V2.9 M4 5.1 V7.4 M0.6 4 H2.9 M5.1 4 H7.4"/><path d="M1.5 1.5 L2.9 2.9 M5.1 5.1 L6.5 6.5 M6.5 1.5 L5.1 2.9 M2.9 5.1 L1.5 6.5"/></g></svg>
<div id="t95" style="position:absolute;left:747px;top:474px;font-size:12px;line-height:12px;font-weight:400;color:#4a5572;white-space:pre;letter-spacing:-0.180px;">Kod</div>
<div style="position:absolute;left:844px;top:469px;width:1px;height:19px;background:#fbfcfd;box-shadow:-1px 0 0 #d3d8e0;"></div>
<div id="t96" style="position:absolute;left:847px;top:474px;font-size:12px;line-height:12px;font-weight:400;color:#4a5572;white-space:pre;letter-spacing:0.578px;">Nazwa</div>
<div style="position:absolute;left:745px;top:489px;width:300px;height:21px;background:#edf5eb;"></div>
<div style="position:absolute;left:733px;top:489px;width:12px;height:23px;background:linear-gradient(90deg,#e6e9ee,#dde1e8);border-right:1px solid #cfd4dc;box-shadow:inset 0 1px 0 #f4f5f8;"></div>
<svg style="position:absolute;left:735px;top:497px;" width="7" height="8" viewBox="0 0 7 8"><ellipse cx="3.5" cy="2" rx="2.7" ry="1.9" fill="#1a1f33"/><ellipse cx="3.5" cy="1.6" rx="1.3" ry="0.6" fill="#e6e9ee"/><rect x="2.8" y="3.3" width="1.5" height="4.2" fill="#1a1f33"/></svg>
<div id="t97" style="position:absolute;left:837px;top:494px;font-size:12px;line-height:12px;font-weight:400;color:#6b6870;white-space:pre;letter-spacing:0.437px;">kliknij aby dodać filtr</div>
<div style="position:absolute;left:745px;top:510px;width:300px;height:2px;background:#b0b9c8;"></div>
<div style="position:absolute;left:745px;top:512px;width:300px;height:20px;background:#f4f6f9;"></div>
<div style="position:absolute;left:733px;top:512px;width:12px;height:20px;background:linear-gradient(90deg,#e6e9ee,#dde1e8);border-right:1px solid #cfd4dc;box-shadow:inset 0 1px 0 #f4f5f8;"></div>
<div id="t98" style="position:absolute;left:747px;top:517px;font-size:12px;line-height:12px;font-weight:400;color:#141a33;white-space:pre;letter-spacing:1.430px;">112</div>
<div id="t99" style="position:absolute;left:847px;top:517px;font-size:12px;line-height:12px;font-weight:400;color:#141a33;white-space:pre;letter-spacing:0.579px;">Skóra brązowa</div>
<div style="position:absolute;left:745px;top:532px;width:300px;height:20px;background:#edf5eb;"></div>
<div style="position:absolute;left:733px;top:532px;width:12px;height:20px;background:linear-gradient(90deg,#e6e9ee,#dde1e8);border-right:1px solid #cfd4dc;box-shadow:inset 0 1px 0 #f4f5f8;"></div>
<div id="t100" style="position:absolute;left:747px;top:537px;font-size:12px;line-height:12px;font-weight:400;color:#141a33;white-space:pre;letter-spacing:0.450px;">Skora beżowa</div>
<div id="t101" style="position:absolute;left:847px;top:537px;font-size:12px;line-height:12px;font-weight:400;color:#141a33;white-space:pre;letter-spacing:0.450px;">Skora beżowa</div>
<div style="position:absolute;left:745px;top:552px;width:300px;height:20px;background:#f4f6f9;"></div>
<div style="position:absolute;left:733px;top:552px;width:12px;height:20px;background:linear-gradient(90deg,#e6e9ee,#dde1e8);border-right:1px solid #cfd4dc;box-shadow:inset 0 1px 0 #f4f5f8;"></div>
<div id="t102" style="position:absolute;left:747px;top:557px;font-size:12px;line-height:12px;font-weight:400;color:#141a33;white-space:pre;letter-spacing:0.482px;">Skóra czarna</div>
<div id="t103" style="position:absolute;left:847px;top:557px;font-size:12px;line-height:12px;font-weight:400;color:#141a33;white-space:pre;letter-spacing:0.482px;">Skóra czarna</div>
<svg style="position:absolute;left:737px;top:519px;" width="4" height="8" viewBox="0 0 4 8"><path d="M0 0 L4 4 L0 8 Z" fill="#1a1f33"/></svg>
<div style="position:absolute;left:700px;top:580px;width:33px;height:1px;background:#8f9cb0;"></div>
<div style="position:absolute;left:700px;top:581px;width:33px;height:1px;background:#e6eaf0;"></div>
<svg style="position:absolute;left:10px;top:10px;" width="18" height="18" viewBox="0 0 18 18"><path d="M6 4 Q6 1 9 1.2 Q11 1.5 10 4" stroke="#1a9a20" stroke-width="2.2" fill="none"/><path d="M10.5 5 Q13.5 4 14.5 6.5 Q15 9 12 9" stroke="#e8b800" stroke-width="2.2" fill="none"/><path d="M10.5 10 Q12 13.5 9.5 15 Q7 16 6.5 12.5" stroke="#e03a10" stroke-width="2.2" fill="none"/><path d="M6 9 Q3 11 1.5 9 Q1 7 4 6" stroke="#1a40d0" stroke-width="2.2" fill="none"/><path d="M6 5 Q8 7.5 10 10 M10 5 Q8 8 6 9.5" stroke="#6a7a90" stroke-width="1" fill="none"/></svg>
<svg style="position:absolute;left:14px;top:30px;" width="16" height="16" viewBox="0 0 16 16"><path d="M0.5 0.5 H11 L13.5 3 V15.5 H0.5 Z" fill="#fafafa" stroke="#d6dae0" stroke-width="1"/><path d="M7 14.5 L12.5 9" stroke="#b8bcc2" stroke-width="0.8"/><path d="M2.6 13.4 L13.6 1.6" stroke="#e8b818" stroke-width="3.2"/><path d="M2.8 13.2 L13.4 1.8" stroke="#1a1a1a" stroke-width="1"/><path d="M12.6 2.6 L14.8 0.4" stroke="#e01818" stroke-width="3"/><path d="M1.4 14.8 L2.8 13.2" stroke="#555" stroke-width="1.4"/></svg>
<svg style="position:absolute;left:128px;top:31px;" width="16" height="16" viewBox="0 0 16 16"><g stroke-linejoin="round"><path d="M1.4 4.4 H3.8 V12 H11.6 V14.4 H1.4 Z" fill="url(#gGreenL)" stroke="#2d5e0a" stroke-width="0.9"/><path d="M5.2 2.4 H7.8 V8 H13.6 V10.4 H5.2 Z" fill="url(#gGreenL)" stroke="#fff" stroke-width="2.2"/><path d="M5.2 2.4 H7.8 V8 H13.6 V10.4 H5.2 Z" fill="url(#gGreenL)" stroke="#2d5e0a" stroke-width="0.9"/><rect x="9.3" y="1.2" width="5.4" height="5.2" rx="1" fill="#b6ee2a" stroke="#fff" stroke-width="2"/><rect x="9.3" y="1.2" width="5.4" height="5.2" rx="1" fill="#b6ee2a" stroke="#4a8a10" stroke-width="0.9"/></g></svg>
<svg style="position:absolute;left:207px;top:31px;" width="16" height="15" viewBox="0 0 16 15"><circle cx="7.5" cy="6.9" r="5.9" fill="#fafcfd" stroke="#d5483a" stroke-width="3"/><circle cx="7.5" cy="6.9" r="5.9" fill="none" stroke="#f4a090" stroke-width="0.8"/><path d="M4 5.6 H8.3" stroke="#b8303a" stroke-width="1.3"/><path d="M8.3 5.2 V10" stroke="#2a3460" stroke-width="1.3"/></svg>
<svg style="position:absolute;left:275px;top:31px;" width="14" height="14" viewBox="0 0 14 14"><path d="M1.5 13.5 V6 L7 1.5 L12.5 6 V13.5 Z" fill="#f4f6fa" stroke="#b8c0cc" stroke-width="1"/><path d="M0.5 6.8 L7 1 L13.5 6.8" stroke="#58a828" stroke-width="1.8" fill="none"/><rect x="5.5" y="8" width="3" height="5.5" fill="#f0a020"/><rect x="5.7" y="4" width="2.6" height="2.6" fill="#6090d0"/></svg>
<svg style="position:absolute;left:390px;top:30px;" width="16" height="16" viewBox="0 0 16 16"><path d="M0.5 0.5 H11 L13.5 3 V15.5 H0.5 Z" fill="#fafafa" stroke="#d6dae0" stroke-width="1"/><path d="M7 14.5 L12.5 9" stroke="#b8bcc2" stroke-width="0.8"/><path d="M2.6 13.4 L13.6 1.6" stroke="#e8b818" stroke-width="3.2"/><path d="M2.8 13.2 L13.4 1.8" stroke="#1a1a1a" stroke-width="1"/><path d="M12.6 2.6 L14.8 0.4" stroke="#e01818" stroke-width="3"/><path d="M1.4 14.8 L2.8 13.2" stroke="#555" stroke-width="1.4"/></svg>
<svg style="position:absolute;left:501px;top:31px;" width="17" height="15" viewBox="0 0 17 15"><rect x="1" y="3.5" width="3" height="11" rx="1.4" fill="#b8d020"/><rect x="5" y="2" width="3" height="12.5" rx="1.4" fill="#1a2438"/><rect x="9" y="0.5" width="3" height="14" rx="1.4" fill="#e85858"/><rect x="13.5" y="0.5" width="3" height="14" rx="1.4" fill="#f0c000"/></svg>
<svg style="position:absolute;left:617px;top:31px;" width="14" height="14" viewBox="0 0 14 14"><path d="M0.5 13 Q1 8.5 7 8.3 Q13 8.5 13 13 Z" fill="#5aa820" stroke="#3a7a10" stroke-width="0.6"/><ellipse cx="6.8" cy="4.6" rx="3.2" ry="4.2" fill="#f0b040"/><path d="M3.6 4 Q3.5 0.2 6.8 0.4 Q10.2 0.3 10 4 Q9 2 6.8 2.3 Q4.5 2 3.6 4 Z" fill="#b8681a"/><rect x="5.3" y="7.6" width="3" height="1.6" fill="#c86a10"/></svg>
<svg style="position:absolute;left:731px;top:32px;" width="13" height="13" viewBox="0 0 13 13"><rect x="0.5" y="0.5" width="12" height="12" rx="1" fill="#f6f8fb" stroke="#9aa6ba" stroke-width="1"/><rect x="0.5" y="0.5" width="12" height="3" fill="#e8503a"/><rect x="5.5" y="5" width="2" height="5.5" fill="#2a3244"/><rect x="0.5" y="11" width="12" height="1.5" fill="#8a9ec0"/></svg>
<svg style="position:absolute;left:847px;top:31px;" width="11" height="13" viewBox="0 0 11 13"><rect x="0.5" y="1" width="10" height="11" rx="2" fill="url(#gGold)"/><path d="M1 4 H10 M1 7 H10 M1 10 H10" stroke="#c0780a" stroke-width="0.7" opacity=".7"/><ellipse cx="5.5" cy="12" rx="4.5" ry="1" fill="#8a4a10"/></svg>
<svg style="position:absolute;left:960px;top:31px;" width="13" height="14" viewBox="0 0 13 14"><rect x="0.5" y="0.5" width="11.5" height="10" fill="url(#gScreen)" stroke="#2a2a30" stroke-width="1"/><path d="M3 13.5 Q6 11 9.5 13.5 Z" fill="#9a9ea6"/><rect x="5" y="10.5" width="3" height="2" fill="#888"/></svg>
<svg style="position:absolute;left:1076px;top:30px;" width="15" height="15" viewBox="0 0 15 15"><path d="M2 5 L7 2 L11 8 L6 11 Z" fill="#e8a030" stroke="#8a4a10" stroke-width="0.8"/><path d="M2 5 L7 2 L8 3.5 L3 6.5 Z" fill="#f8d890"/><path d="M4.5 1.5 L6 0" stroke="#c02020" stroke-width="1.2"/><path d="M11 6 Q13.5 6 13.8 10" stroke="#3a9a18" stroke-width="2" fill="none"/><rect x="1" y="13" width="13" height="2" fill="#c2c6cc"/></svg>
<svg style="position:absolute;left:1106px;top:30px;" width="16" height="16" viewBox="0 0 16 16"><circle cx="8" cy="8" r="7.2" fill="url(#gHelp)" stroke="#2a4a98" stroke-width="1"/><circle cx="8" cy="8" r="6" fill="none" stroke="#fff" stroke-width="0.8" opacity=".8"/><path d="M5.6 6 Q5.8 3.5 8 3.5 Q10.5 3.6 10.4 5.8 Q10.3 7.2 8.6 8 L8.5 9.5" stroke="#fff" stroke-width="1.9" fill="none"/><rect x="7.4" y="10.8" width="2" height="2" fill="#fff"/></svg>
<svg style="position:absolute;left:1135px;top:31px;" width="17" height="15" viewBox="0 0 17 15"><path d="M0.5 0.5 H16 V10.5 H10 L8 13.5 L6 10.5 H0.5 Z" fill="url(#gChat)" stroke="#2a66b8" stroke-width="1"/><g fill="#fff" stroke="#2a5aa8" stroke-width="0.6"><circle cx="5" cy="5.5" r="1.3"/><circle cx="8.3" cy="5.5" r="1.3"/><circle cx="11.6" cy="5.5" r="1.3"/></g></svg>
<svg style="position:absolute;left:31px;top:135px;" width="20" height="20" viewBox="0 0 20 20"><path d="M10 10.5 L5.5 18.3 A9 9 0 1 1 14.5 18.3 Z" fill="#f8fafc" stroke="#d4dbe6" stroke-width="0.8"/><path d="M5.6 14.9 A6.2 6.2 0 0 1 12.1 4.7" stroke="#86bcee" stroke-width="3.4" fill="none"/><path d="M15.4 7.4 A6.2 6.2 0 0 1 14.4 14.9" stroke="#d84a36" stroke-width="3.4" fill="none"/><path d="M10 10.5 L14.8 5.7" stroke="#1a2030" stroke-width="1.3"/><circle cx="9.8" cy="10.7" r="1.7" fill="#1a2030"/></svg>
<svg style="position:absolute;left:34px;top:169px;" width="20" height="20" viewBox="0 0 20 20"><path d="M10 10.5 L5.5 18.3 A9 9 0 1 1 14.5 18.3 Z" fill="#f8fafc" stroke="#d4dbe6" stroke-width="0.8"/><path d="M5.6 14.9 A6.2 6.2 0 0 1 12.1 4.7" stroke="#86bcee" stroke-width="3.4" fill="none"/><path d="M15.4 7.4 A6.2 6.2 0 0 1 14.4 14.9" stroke="#d84a36" stroke-width="3.4" fill="none"/><path d="M10 10.5 L14.8 5.7" stroke="#1a2030" stroke-width="1.3"/><circle cx="9.8" cy="10.7" r="1.7" fill="#1a2030"/></svg>
<svg style="position:absolute;left:36px;top:199px;" width="17" height="15" viewBox="0 0 17 15"><path d="M0.5 14.5 V8 L5 5.5 V8 L9.5 5.5 V8 L13 5.5 V1 H15.5 V14.5 Z" fill="url(#gFact)" stroke="#8a1a10" stroke-width="0.8"/><rect x="2.5" y="9.5" width="2.5" height="1.5" fill="#fff"/><rect x="6.5" y="9.5" width="2.5" height="1.5" fill="#fff"/><rect x="10.5" y="9.5" width="2.5" height="1.5" fill="#fff"/><rect x="13.6" y="2" width="1.2" height="1.2" fill="#fff"/><rect x="13.6" y="4.5" width="1.2" height="1.2" fill="#fff"/></svg>
<svg style="position:absolute;left:36px;top:225px;" width="19" height="19" viewBox="0 0 19 19"><path d="M0.5 0.5 L15 17.5 H0.5 Z" fill="url(#gTri)" stroke="#b07820" stroke-width="0.8"/><path d="M3.5 9 L8.5 15 H3.5 Z" fill="#2d3a57"/><path d="M5 15.5 L16.5 4" stroke="#3a3020" stroke-width="3"/><path d="M5 15.5 L16.5 4" stroke="#f4b830" stroke-width="2"/><path d="M15.5 5 L18 2.5" stroke="#e84a4a" stroke-width="2.6"/><path d="M4 17 L5.5 15" stroke="#333" stroke-width="1.2"/></svg>
<svg style="position:absolute;left:35px;top:252px;" width="18" height="21" viewBox="0 0 18 21"><path d="M1 1 H11 L15.5 5.5 V19 H1 Z" fill="#f4f6fa" stroke="#fdfdfe" stroke-width="0.8"/><path d="M11 1 V5.5 H15.5 Z" fill="#fff" stroke="#5a6ab0" stroke-width="0.9"/><path d="M15.5 5.5 V17" stroke="#5a6ab0" stroke-width="0.6"/><path d="M9.3 9.2 A3.2 3.2 0 1 0 9.6 13.2" stroke="#3a4050" stroke-width="1.6" fill="none"/><path d="M8.5 12.5 L15.5 19.5" stroke="#a9b2c0" stroke-width="2.8" stroke-linecap="round"/></svg>
<svg style="position:absolute;left:34px;top:281px;" width="21" height="21" viewBox="0 0 21 21"><g fill="url(#gGrid)" stroke="#4f86c4" stroke-width="0.5"><rect x="0.5" y="0.5" width="9" height="6"/><rect x="11" y="0.5" width="9.5" height="6"/><rect x="0.5" y="7.5" width="9" height="6"/><rect x="11" y="7.5" width="9.5" height="6"/><rect x="0.5" y="14.5" width="9" height="6"/><rect x="11" y="14.5" width="9.5" height="6"/></g></svg>
<svg style="position:absolute;left:35px;top:310px;" width="19" height="18" viewBox="0 0 19 18"><path d="M1.5 4 H5 V1 H9 V4 H12 V7 H15 V10 H1.5 Z" fill="#fad028" stroke="#ea8c10" stroke-width="1.3" stroke-linejoin="round"/><path d="M1.5 9.5 V15" stroke="#f0a020" stroke-width="2"/><rect x="5" y="10" width="7" height="5.5" rx="2.6" fill="none" stroke="#b4b8c0" stroke-width="2"/><rect x="10.5" y="10" width="7" height="5.5" rx="2.6" fill="none" stroke="#e6e8ec" stroke-width="2"/><path d="M8 12.8 H14" stroke="#fff" stroke-width="1.4"/></svg>
<svg style="position:absolute;left:36px;top:340px;" width="16" height="16" viewBox="0 0 16 16"><circle cx="8" cy="8" r="7.3" fill="url(#gRing)" stroke="#c8ccd2" stroke-width="0.8"/><circle cx="8" cy="8" r="5.4" fill="url(#gClock)"/><path d="M7.3 4 V8.5 L10 10.5" stroke="#fff" stroke-width="1.2" fill="none"/></svg>
<svg style="position:absolute;left:32px;top:362px;" width="24" height="26" viewBox="0 0 24 26"><path d="M5 11.5 Q9 2 17 6" stroke="url(#gArc)" stroke-width="3.8" fill="none"/><path d="M14 11.5 L21 11.5 L20.6 4.5 Z" fill="#9ccaf0"/><text x="2" y="23.5" font-family="Liberation Sans" font-weight="bold" font-size="13" fill="#e0402e" transform="scale(1 1)">A</text><text x="16" y="23.3" font-family="Liberation Sans" font-weight="bold" font-size="12.5" fill="#48a010" transform="translate(16 0) scale(0.8 1) translate(-16 0)">B</text></svg>
<svg style="position:absolute;left:36px;top:396px;" width="16" height="16" viewBox="0 0 16 16"><circle cx="8" cy="8" r="7.3" fill="url(#gRing)" stroke="#c8ccd2" stroke-width="0.8"/><circle cx="8" cy="8" r="5.4" fill="url(#gClock)"/><path d="M7.3 4 V8.5 L10 10.5" stroke="#fff" stroke-width="1.2" fill="none"/></svg>
<svg style="position:absolute;left:248px;top:86px;" width="16" height="16" viewBox="0 0 16 16"><path d="M5.5 0.5 H10.5 V5.5 H15.5 V10.5 H10.5 V15.5 H5.5 V10.5 H0.5 V5.5 H5.5 Z" fill="url(#gPlus)" stroke="#2a5cc0" stroke-width="1"/><path d="M6.5 1.5 H9.5 V6.5 H14.5 V7.2 H6.5 Z" fill="#fff" opacity=".35"/></svg>
<svg style="position:absolute;left:286px;top:86px;" width="15" height="16" viewBox="0 0 15 16"><path d="M5 0.8 H12.2 V15.2 H0.8 V5 Z" fill="#fcfcfc" stroke="#b4b8c0" stroke-width="0.9"/><path d="M0.8 5 L5 0.8 V5 Z" fill="#e4e6ea"/><path d="M4 11 L11 4 L13.4 6.4 L6.4 13.4 Z" fill="#3a88e6"/><path d="M11 4 L12.3 2.7 Q12.8 2.3 13.3 2.8 L14.6 4.1 Q15 4.6 14.6 5.1 L13.4 6.4 Z" fill="#3a3e48"/><path d="M4 11 L6.4 13.4 L2.6 14.8 Z" fill="#4a4e58"/></svg>
<svg style="position:absolute;left:326px;top:88px;" width="12" height="12" viewBox="0 0 12 12"><path d="M1.8 1.8 L10.2 10.2 M10.2 1.8 L1.8 10.2" stroke="url(#gDel)" stroke-width="4" stroke-linecap="round"/></svg>
<div id="t104" style="position:absolute;left:244px;top:108px;font-size:10px;line-height:10px;font-weight:400;color:#1a2442;white-space:pre;letter-spacing:-0.285px;">Dodaj</div>
<div id="t105" style="position:absolute;left:281px;top:108px;font-size:10px;line-height:10px;font-weight:400;color:#1a2442;white-space:pre;letter-spacing:0.041px;">Edytuj</div>
<div id="t106" style="position:absolute;left:322px;top:108px;font-size:10px;line-height:10px;font-weight:400;color:#1a2442;white-space:pre;letter-spacing:-0.453px;">Usuń</div>
<svg style="position:absolute;left:600px;top:94px;" width="16" height="15" viewBox="0 0 16 15"><g fill="#b8d6f6" stroke="#2f6fd0" stroke-width="1"><circle cx="2.5" cy="3" r="1.9"/><circle cx="2.5" cy="8" r="1.9"/><circle cx="2.5" cy="13" r="1.9"/></g><g stroke="#fff" stroke-width="3" stroke-linecap="round"><path d="M6.5 2.5 H14.5 M6.5 7.5 H14.5 M6.5 12.5 H14.5"/></g><g stroke="#1c2030" stroke-width="1.6"><path d="M6.5 2.5 H14.5 M6.5 7.5 H14.5 M6.5 12.5 H14.5"/></g></svg>
<svg style="position:absolute;left:631px;top:93px;" width="17" height="17" viewBox="0 0 17 17"><path d="M10 1 Q6 2.5 6 7 L8.5 7 L4 11.5 L0 7 L2.5 7 Q3 2 10 1 Z" fill="url(#gArrL)"/><path d="M6.5 16.5 Q10.5 15 10.5 10 L8 10 L12.5 5 L17 10 L14 10 Q13.5 15.5 6.5 16.5 Z" fill="url(#gArrR)"/></svg>
<svg style="position:absolute;left:666px;top:93px;" width="17" height="17" viewBox="0 0 17 17"><path d="M1 0.5 H4 M2.5 0.5 V11.5 M1 11.5 H4" stroke="#0e1636" stroke-width="1"/><rect x="4.5" y="0.5" width="11" height="11" fill="url(#gBox)" stroke="#8fa2cc" stroke-width="1"/><path d="M4.5 11.5 H15.5" stroke="#4a84d0" stroke-width="1"/><path d="M5 14.5 H15 M5 13 V16 M15 13 V16" stroke="#0e1636" stroke-width="1"/></svg>
<svg style="position:absolute;left:710px;top:109px;" width="16" height="16" viewBox="0 0 16 16"><path d="M5.5 0.5 H10.5 V5.5 H15.5 V10.5 H10.5 V15.5 H5.5 V10.5 H0.5 V5.5 H5.5 Z" fill="url(#gPlus)" stroke="#2a5cc0" stroke-width="1"/><path d="M6.5 1.5 H9.5 V6.5 H14.5 V7.2 H6.5 Z" fill="#fff" opacity=".35"/></svg>
<svg style="position:absolute;left:748px;top:109px;" width="15" height="16" viewBox="0 0 15 16"><path d="M5 0.8 H12.2 V15.2 H0.8 V5 Z" fill="#fcfcfc" stroke="#b4b8c0" stroke-width="0.9"/><path d="M0.8 5 L5 0.8 V5 Z" fill="#e4e6ea"/><path d="M4 11 L11 4 L13.4 6.4 L6.4 13.4 Z" fill="#3a88e6"/><path d="M11 4 L12.3 2.7 Q12.8 2.3 13.3 2.8 L14.6 4.1 Q15 4.6 14.6 5.1 L13.4 6.4 Z" fill="#3a3e48"/><path d="M4 11 L6.4 13.4 L2.6 14.8 Z" fill="#4a4e58"/></svg>
<svg style="position:absolute;left:787px;top:108px;" width="16" height="16" viewBox="0 0 16 16"><path d="M3.5 0.5 H10.5 V11.5 H0.5 V3.5 Z" fill="#f2f7fc" stroke="#34445e" stroke-width="1"/><path d="M0.5 3.5 H3.5 V0.5" fill="#fff" stroke="#34445e" stroke-width="0.8"/><path d="M2.5 6.5 H5 M2.5 8.5 H5" stroke="#6a7a96" stroke-width="0.9"/><rect x="5.5" y="4.5" width="10" height="11" fill="#e6f0fa" stroke="#34445e" stroke-width="1"/><path d="M7.5 8.5 H13.5 M7.5 10.5 H13.5 M7.5 12.5 H13.5" stroke="#5a6a86" stroke-width="1"/></svg>
<svg style="position:absolute;left:826px;top:112px;" width="12" height="12" viewBox="0 0 12 12"><path d="M1.8 1.8 L10.2 10.2 M10.2 1.8 L1.8 10.2" stroke="url(#gDel)" stroke-width="4" stroke-linecap="round"/></svg>
<div id="t107" style="position:absolute;left:706px;top:131px;font-size:10px;line-height:10px;font-weight:400;color:#1a2442;white-space:pre;letter-spacing:-0.285px;">Dodaj</div>
<div id="t108" style="position:absolute;left:742px;top:131px;font-size:10px;line-height:10px;font-weight:400;color:#1a2442;white-space:pre;letter-spacing:0.041px;">Edytuj</div>
<div id="t109" style="position:absolute;left:781px;top:131px;font-size:10px;line-height:10px;font-weight:400;color:#1a2442;white-space:pre;letter-spacing:-0.163px;">Klonuj</div>
<div id="t110" style="position:absolute;left:821px;top:131px;font-size:10px;line-height:10px;font-weight:400;color:#1a2442;white-space:pre;letter-spacing:-0.453px;">Usuń</div>
<svg style="position:absolute;left:1068px;top:115px;" width="17" height="17" viewBox="0 0 17 17"><path d="M1 0.5 H4 M2.5 0.5 V11.5 M1 11.5 H4" stroke="#0e1636" stroke-width="1"/><rect x="4.5" y="0.5" width="11" height="11" fill="url(#gBox)" stroke="#8fa2cc" stroke-width="1"/><path d="M4.5 11.5 H15.5" stroke="#4a84d0" stroke-width="1"/><path d="M5 14.5 H15 M5 13 V16 M15 13 V16" stroke="#0e1636" stroke-width="1"/></svg>
<svg style="position:absolute;left:1104px;top:117px;" width="17" height="17" viewBox="0 0 17 17"><path d="M10 1 Q6 2.5 6 7 L8.5 7 L4 11.5 L0 7 L2.5 7 Q3 2 10 1 Z" fill="url(#gArrL)"/><path d="M6.5 16.5 Q10.5 15 10.5 10 L8 10 L12.5 5 L17 10 L14 10 Q13.5 15.5 6.5 16.5 Z" fill="url(#gArrR)"/></svg>
<svg style="position:absolute;left:1137px;top:117px;" width="16" height="15" viewBox="0 0 16 15"><g fill="#b8d6f6" stroke="#2f6fd0" stroke-width="1"><circle cx="2.5" cy="3" r="1.9"/><circle cx="2.5" cy="8" r="1.9"/><circle cx="2.5" cy="13" r="1.9"/></g><g stroke="#fff" stroke-width="3" stroke-linecap="round"><path d="M6.5 2.5 H14.5 M6.5 7.5 H14.5 M6.5 12.5 H14.5"/></g><g stroke="#1c2030" stroke-width="1.6"><path d="M6.5 2.5 H14.5 M6.5 7.5 H14.5 M6.5 12.5 H14.5"/></g></svg>
<svg style="position:absolute;left:247px;top:477px;" width="16" height="16" viewBox="0 0 16 16"><path d="M5.5 0.5 H10.5 V5.5 H15.5 V10.5 H10.5 V15.5 H5.5 V10.5 H0.5 V5.5 H5.5 Z" fill="url(#gPlus)" stroke="#2a5cc0" stroke-width="1"/><path d="M6.5 1.5 H9.5 V6.5 H14.5 V7.2 H6.5 Z" fill="#fff" opacity=".35"/></svg>
<svg style="position:absolute;left:248px;top:505px;" width="15" height="16" viewBox="0 0 15 16"><path d="M5 0.8 H12.2 V15.2 H0.8 V5 Z" fill="#fcfcfc" stroke="#b4b8c0" stroke-width="0.9"/><path d="M0.8 5 L5 0.8 V5 Z" fill="#e4e6ea"/><path d="M4 11 L11 4 L13.4 6.4 L6.4 13.4 Z" fill="#3a88e6"/><path d="M11 4 L12.3 2.7 Q12.8 2.3 13.3 2.8 L14.6 4.1 Q15 4.6 14.6 5.1 L13.4 6.4 Z" fill="#3a3e48"/><path d="M4 11 L6.4 13.4 L2.6 14.8 Z" fill="#4a4e58"/></svg>
<svg style="position:absolute;left:248px;top:533px;" width="16" height="16" viewBox="0 0 16 16"><path d="M3.5 0.5 H10.5 V11.5 H0.5 V3.5 Z" fill="#f2f7fc" stroke="#34445e" stroke-width="1"/><path d="M0.5 3.5 H3.5 V0.5" fill="#fff" stroke="#34445e" stroke-width="0.8"/><path d="M2.5 6.5 H5 M2.5 8.5 H5" stroke="#6a7a96" stroke-width="0.9"/><rect x="5.5" y="4.5" width="10" height="11" fill="#e6f0fa" stroke="#34445e" stroke-width="1"/><path d="M7.5 8.5 H13.5 M7.5 10.5 H13.5 M7.5 12.5 H13.5" stroke="#5a6a86" stroke-width="1"/></svg>
<svg style="position:absolute;left:249px;top:564px;" width="12" height="12" viewBox="0 0 12 12"><path d="M1.8 1.8 L10.2 10.2 M10.2 1.8 L1.8 10.2" stroke="url(#gDel)" stroke-width="4" stroke-linecap="round"/></svg>
<svg style="position:absolute;left:244px;top:593px;" width="17" height="17" viewBox="0 0 17 17"><path d="M1 0.5 H4 M2.5 0.5 V11.5 M1 11.5 H4" stroke="#0e1636" stroke-width="1"/><rect x="4.5" y="0.5" width="11" height="11" fill="url(#gBox)" stroke="#8fa2cc" stroke-width="1"/><path d="M4.5 11.5 H15.5" stroke="#4a84d0" stroke-width="1"/><path d="M5 14.5 H15 M5 13 V16 M15 13 V16" stroke="#0e1636" stroke-width="1"/></svg>
<svg style="position:absolute;left:668px;top:477px;" width="16" height="15" viewBox="0 0 16 15"><g fill="#b8d6f6" stroke="#2f6fd0" stroke-width="1"><circle cx="2.5" cy="3" r="1.9"/><circle cx="2.5" cy="8" r="1.9"/><circle cx="2.5" cy="13" r="1.9"/></g><g stroke="#fff" stroke-width="3" stroke-linecap="round"><path d="M6.5 2.5 H14.5 M6.5 7.5 H14.5 M6.5 12.5 H14.5"/></g><g stroke="#1c2030" stroke-width="1.6"><path d="M6.5 2.5 H14.5 M6.5 7.5 H14.5 M6.5 12.5 H14.5"/></g></svg>
<svg style="position:absolute;left:250px;top:445px;" width="16" height="16" viewBox="0 0 16 16"><rect x="0" y="0" width="16" height="16" fill="#c8c9cd"/><path d="M6 5 L10.5 1 L15 5 Z" fill="#c81010"/><rect x="7" y="5" width="7" height="6" fill="#8a9096"/><rect x="8" y="5.5" width="5" height="1.2" fill="#e8f4f8"/><path d="M1 15 L8 7 L11 9 L5 15.5 Z" fill="#f2f2f8" opacity=".9"/><path d="M3 13 L8 8" stroke="#a0a0d0" stroke-width="0.7"/><rect x="10" y="11" width="5" height="2" fill="#6a6e74"/></svg>
<svg style="position:absolute;left:709px;top:474px;" width="16" height="16" viewBox="0 0 16 16"><path d="M5.5 0.5 H10.5 V5.5 H15.5 V10.5 H10.5 V15.5 H5.5 V10.5 H0.5 V5.5 H5.5 Z" fill="url(#gPlus)" stroke="#2a5cc0" stroke-width="1"/><path d="M6.5 1.5 H9.5 V6.5 H14.5 V7.2 H6.5 Z" fill="#fff" opacity=".35"/></svg>
<svg style="position:absolute;left:710px;top:502px;" width="15" height="16" viewBox="0 0 15 16"><path d="M5 0.8 H12.2 V15.2 H0.8 V5 Z" fill="#fcfcfc" stroke="#b4b8c0" stroke-width="0.9"/><path d="M0.8 5 L5 0.8 V5 Z" fill="#e4e6ea"/><path d="M4 11 L11 4 L13.4 6.4 L6.4 13.4 Z" fill="#3a88e6"/><path d="M11 4 L12.3 2.7 Q12.8 2.3 13.3 2.8 L14.6 4.1 Q15 4.6 14.6 5.1 L13.4 6.4 Z" fill="#3a3e48"/><path d="M4 11 L6.4 13.4 L2.6 14.8 Z" fill="#4a4e58"/></svg>
<svg style="position:absolute;left:710px;top:530px;" width="16" height="16" viewBox="0 0 16 16"><path d="M3.5 0.5 H10.5 V11.5 H0.5 V3.5 Z" fill="#f2f7fc" stroke="#34445e" stroke-width="1"/><path d="M0.5 3.5 H3.5 V0.5" fill="#fff" stroke="#34445e" stroke-width="0.8"/><path d="M2.5 6.5 H5 M2.5 8.5 H5" stroke="#6a7a96" stroke-width="0.9"/><rect x="5.5" y="4.5" width="10" height="11" fill="#e6f0fa" stroke="#34445e" stroke-width="1"/><path d="M7.5 8.5 H13.5 M7.5 10.5 H13.5 M7.5 12.5 H13.5" stroke="#5a6a86" stroke-width="1"/></svg>
<svg style="position:absolute;left:711px;top:561px;" width="12" height="12" viewBox="0 0 12 12"><path d="M1.8 1.8 L10.2 10.2 M10.2 1.8 L1.8 10.2" stroke="url(#gDel)" stroke-width="4" stroke-linecap="round"/></svg>
<svg style="position:absolute;left:709px;top:588px;" width="16" height="16" viewBox="0 0 16 16"><path d="M5.5 0.5 H10.5 V5.5 H15.5 V10.5 H10.5 V15.5 H5.5 V10.5 H0.5 V5.5 H5.5 Z" fill="url(#gPlusG)" stroke="#1f7a10" stroke-width="1"/><path d="M6.5 1.5 H9.5 V6.5 H14.5 V7.2 H6.5 Z" fill="#fff" opacity=".35"/></svg>
<svg style="position:absolute;left:709px;top:616px;" width="14" height="14" viewBox="0 0 14 14"><path d="M2 2 L12 12 M12 2 L2 12" stroke="#8a0a0a" stroke-width="4.4" stroke-linecap="round"/><path d="M2 2 L12 12 M12 2 L2 12" stroke="url(#gRedX)" stroke-width="3" stroke-linecap="round"/></svg>
<svg style="position:absolute;left:706px;top:649px;" width="17" height="17" viewBox="0 0 17 17"><path d="M1 0.5 H4 M2.5 0.5 V11.5 M1 11.5 H4" stroke="#0e1636" stroke-width="1"/><rect x="4.5" y="0.5" width="11" height="11" fill="url(#gBox)" stroke="#8fa2cc" stroke-width="1"/><path d="M4.5 11.5 H15.5" stroke="#4a84d0" stroke-width="1"/><path d="M5 14.5 H15 M5 13 V16 M15 13 V16" stroke="#0e1636" stroke-width="1"/></svg>
<svg style="position:absolute;left:1135px;top:474px;" width="16" height="15" viewBox="0 0 16 15"><g fill="#b8d6f6" stroke="#2f6fd0" stroke-width="1"><circle cx="2.5" cy="3" r="1.9"/><circle cx="2.5" cy="8" r="1.9"/><circle cx="2.5" cy="13" r="1.9"/></g><g stroke="#fff" stroke-width="3" stroke-linecap="round"><path d="M6.5 2.5 H14.5 M6.5 7.5 H14.5 M6.5 12.5 H14.5"/></g><g stroke="#1c2030" stroke-width="1.6"><path d="M6.5 2.5 H14.5 M6.5 7.5 H14.5 M6.5 12.5 H14.5"/></g></svg>
<svg style="position:absolute;left:712px;top:442px;" width="16" height="16" viewBox="0 0 16 16"><rect x="0" y="0" width="16" height="16" fill="#c8c9cd"/><path d="M6 5 L10.5 1 L15 5 Z" fill="#c81010"/><rect x="7" y="5" width="7" height="6" fill="#8a9096"/><rect x="8" y="5.5" width="5" height="1.2" fill="#e8f4f8"/><path d="M1 15 L8 7 L11 9 L5 15.5 Z" fill="#f2f2f8" opacity=".9"/><path d="M3 13 L8 8" stroke="#a0a0d0" stroke-width="0.7"/><rect x="10" y="11" width="5" height="2" fill="#6a6e74"/></svg>
</body></html>
